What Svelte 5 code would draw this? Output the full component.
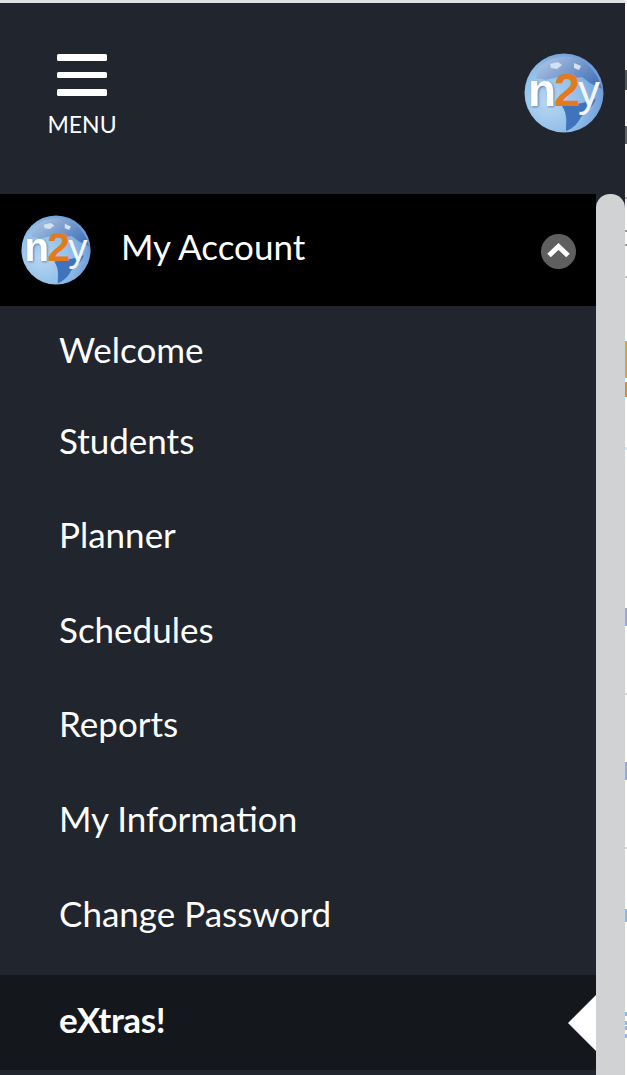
<script>
  const links = ["Welcome", "Students", "Planner", "Schedules", "Reports", "My Information", "Change Password"];
</script>

{#snippet logo(id, size)}
  <svg class="logo" width={size} height={size} viewBox="0 0 80 80">
    <defs>
      <radialGradient id="sea{id}" cx="0.3" cy="0.62" r="0.75">
        <stop offset="0" stop-color="#b9d7f3" />
        <stop offset="0.6" stop-color="#8dbce8" />
        <stop offset="1" stop-color="#6b97d2" />
      </radialGradient>
      <linearGradient id="land{id}" x1="0" y1="0" x2="1" y2="0.6">
        <stop offset="0" stop-color="#b4cbe6" />
        <stop offset="1" stop-color="#4a76bb" />
      </linearGradient>
    </defs>
    <circle cx="40" cy="40" r="39.5" fill="url(#sea{id})" />
    <path d="M15 14 C28 2 52 -1 66 14 C73 22 76 28 78 36 L66 30 L58 24 L44 26 L34 24 L22 27 L12 25 Z" fill="url(#land{id})" />
    <path d="M26 11 L34 9 L38 12 L33 16 L27 15 Z M50 10 L57 13 L55 17 L50 15 Z" fill="#d3e1f4" />
    <path d="M38 53 L58 50 L72 46 C68 56 60 60 57 64 C54 70 50 75 42 78 C42 70 44 62 38 53 Z" fill="#3f74bd" />
    <text x="4" y="53" class="n">n</text>
    <text x="30" y="53" class="two">2</text>
    <text x="54" y="53" class="y">y</text>
  </svg>
{/snippet}

<div class="page">
  <div class="panel">
    <header class="top">
      <button class="burger">
        <span class="bars"><i></i><i></i><i></i></span>
        <span class="label">MENU</span>
      </button>
      <span class="top-logo">{@render logo("a", 80)}</span>
    </header>

    <div class="body">
      <nav class="menu">
        <div class="account">
          {@render logo("b", 70)}
          <span class="title">My Account</span>
          <svg class="chev" width="35" height="35" viewBox="0 0 35 35">
            <circle cx="17.5" cy="17.5" r="17.5" fill="#5f5f5f" />
            <path d="M8 21.5 L17.5 12.5 L27 21.5" fill="none" stroke="#fff" stroke-width="5" />
          </svg>
        </div>
        <ul>
          {#each links as link}
            <li>{link}</li>
          {/each}
        </ul>
        <div class="extras">
          <span class="extras-text">eXtras!</span>
          <span class="arrow"></span>
        </div>
      </nav>
      <div class="scrollbar"></div>
    </div>
  </div>
  <div class="behind"></div>
</div>

<style>
  :global(body) {
    margin: 0;
    background: #fff;
  }
  .page {
    display: flex;
    height: 1075px;
    width: 627px;
    overflow: hidden;
    font-family: Lato, "Liberation Sans", sans-serif;
    color: #fff;
  }
  .panel {
    width: 625px;
    display: flex;
    flex-direction: column;
    background: #20252e;
    border-top: 3px solid #e0e1e3;
    box-sizing: border-box;
  }
  .top {
    height: 191px;
    flex: none;
    display: flex;
    justify-content: space-between;
    padding: 51px 21px 0 48px;
    box-sizing: border-box;
    align-items: flex-start;
  }
  .top-logo {
    display: block;
    height: 80px;
    margin-top: -1px;
  }
  .burger {
    all: unset;
    display: flex;
    flex-direction: column;
    align-items: center;
    width: 68px;
  }
  .bars {
    display: flex;
    flex-direction: column;
    gap: 11px;
    width: 50px;
  }
  .bars i {
    display: block;
    height: 6.5px;
    background: #fff;
    border-radius: 1.5px;
  }
  .label {
    font-size: 23px;
    line-height: 29px;
    margin-top: 14px;
  }
  .body {
    flex: 1;
    display: flex;
    min-height: 0;
  }
  .menu {
    width: 596px;
    flex: none;
  }
  .account {
    height: 112px;
    background: #000;
    display: flex;
    align-items: center;
    padding: 0 20px 0 21px;
    box-sizing: border-box;
  }
  .title {
    font-size: 35px;
    margin-left: 30px;
    margin-bottom: 8px;
    flex: 1;
  }
  .chev {
    margin-top: 2px;
  }
  ul {
    list-style: none;
    margin: 0;
    padding: 0;
  }
  li {
    height: 94.6px;
    box-sizing: border-box;
    padding-left: 59px;
    font-size: 35px;
    line-height: 79px;
  }
  li:first-child {
    padding-top: 3.5px;
  }
  .extras {
    height: 95px;
    margin-top: 7px;
    background: #14171c;
    display: flex;
    justify-content: space-between;
    align-items: center;
    padding-left: 59px;
    font-size: 35px;
    font-weight: 700;
  }
  .extras-text {
    letter-spacing: -0.4px;
    margin-bottom: 8px;
  }
  .arrow {
    width: 0;
    height: 0;
    border-style: solid;
    border-width: 28px 28px 28px 0;
    border-color: transparent #fff transparent transparent;
  }
  .scrollbar {
    flex: 1;
    background: #d1d2d4;
    border-radius: 14px 14px 0 0;
  }
  /* slivers of the page under the drawer */
  .behind {
    flex: 1;
    background: linear-gradient(
      to bottom,
      #fff 0 70px, #555a60 70px 90px,
      #fff 90px 126px, #666a70 126px 144px,
      #fff 144px 197px, #c4c4c4 197px 199px,
      #fff 199px 230px, #999 230px 232px,
      #fff 232px 244px, #999 244px 246px,
      #fff 246px 276px, #c4c4c4 276px 278px,
      #fff 278px 341px, #e3a032 341px 378px,
      #fff 378px 382px, #dd8a2e 382px 397px,
      #fff 397px 447px, #d4e8fa 447px 450px,
      #fff 450px 608px, #9aa6e6 608px 626px,
      #fff 626px 693px, #d4d4d4 693px 695px,
      #fff 695px 762px, #9aa6e6 762px 780px,
      #fff 780px 847px, #d4d4d4 847px 849px,
      #fff 849px 909px, #8fb6ee 909px 922px,
      #fff 922px 1012px, #8fb4ec 1012px 1016px,
      #fff 1016px 1021px, #8fb4ec 1021px 1025px,
      #fff 1025px 1026px, #8fb4ec 1026px 1030px,
      #fff 1030px 1034px, #8fb4ec 1034px 1038px,
      #fff 1038px
    );
  }
  .logo text {
    font-family: "Liberation Sans", Arial, sans-serif;
    font-size: 46px;
  }
  .logo .n {
    fill: #fff;
    font-weight: 700;
    filter: drop-shadow(1px 1px 1px rgba(40, 60, 100, 0.5));
  }
  .logo .two {
    fill: #e37a20;
    font-weight: 700;
    font-size: 47px;
  }
  .logo .y {
    fill: #f2f6fb;
    font-size: 44px;
  }
</style>
